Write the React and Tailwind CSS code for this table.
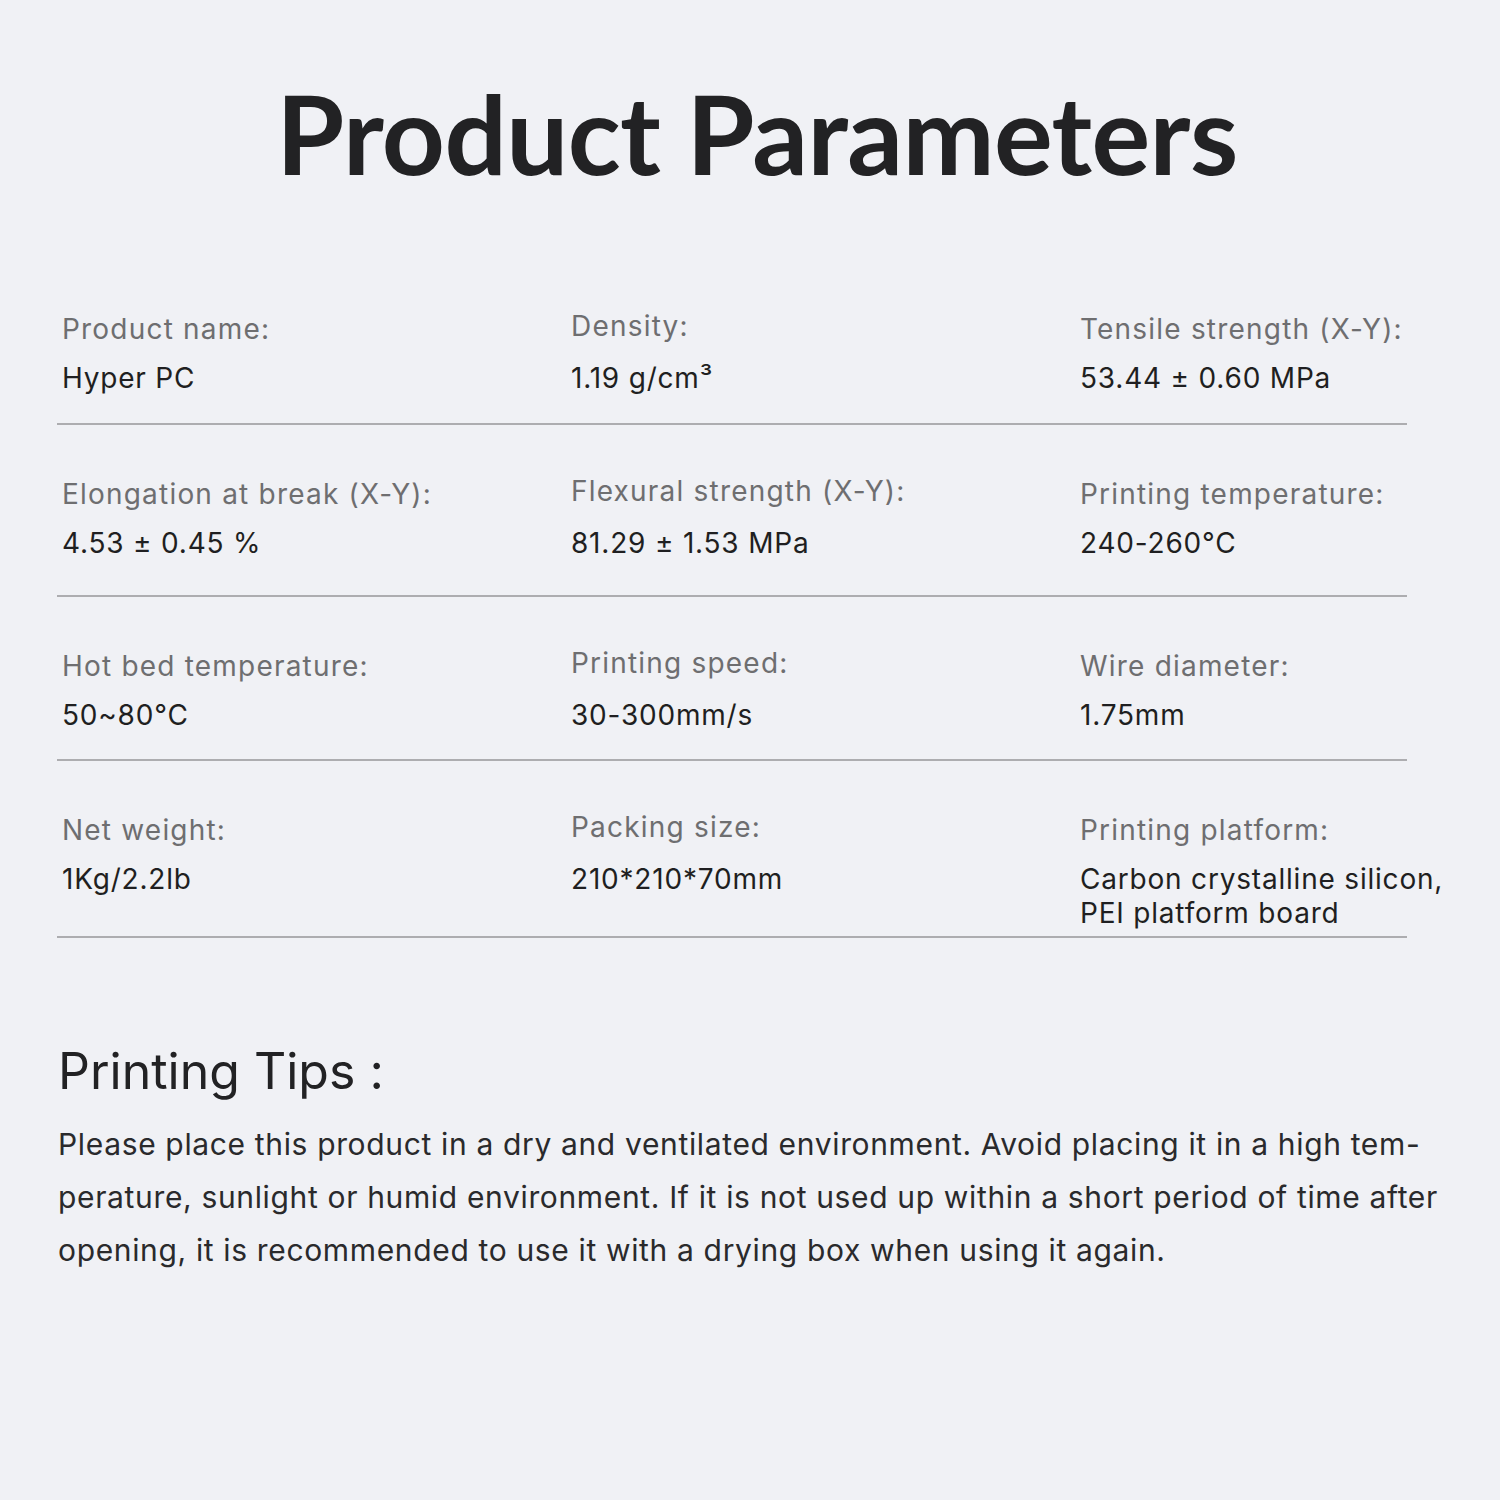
import React from 'react';

const rows = [
  {
    h: 'h-[165px]',
    items: [
      { label: 'Product name:', value: ['Hyper PC'] },
      { label: 'Density:', value: ['1.19 g/cm³'] },
      { label: 'Tensile strength (X-Y):', value: ['53.44 ± 0.60 MPa'] },
    ],
  },
  {
    h: 'h-[172px]',
    items: [
      { label: 'Elongation at break (X-Y):', value: ['4.53 ± 0.45 %'] },
      { label: 'Flexural strength (X-Y):', value: ['81.29 ± 1.53 MPa'] },
      { label: 'Printing temperature:', value: ['240-260°C'] },
    ],
  },
  {
    h: 'h-[164px]',
    items: [
      { label: 'Hot bed temperature:', value: ['50~80°C'] },
      { label: 'Printing speed:', value: ['30-300mm/s'] },
      { label: 'Wire diameter:', value: ['1.75mm'] },
    ],
  },
  {
    h: 'h-[177px]',
    items: [
      { label: 'Net weight:', value: ['1Kg/2.2lb'] },
      { label: 'Packing size:', value: ['210*210*70mm'] },
      { label: 'Printing platform:', value: ['Carbon crystalline silicon,', 'PEI platform board'] },
    ],
  },
];

const Param = ({ label, value, col }) => (
  <div className={`pl-[5px] ${col === 2 ? 'flex-1 min-w-0' : 'w-[509px] shrink-0'} ${col === 1 ? '-mt-[3px]' : ''}`}>
    <div className="text-[28px] leading-[34px] tracking-[1.2px] text-[#6e6e70] whitespace-nowrap">{label}</div>
    <p className={`mt-[15px] text-[28px] leading-[34px] tracking-[0.8px] text-[#1f1f21] whitespace-nowrap ${col === 1 ? 'pt-[3px]' : ''}`}>
      {value.map((v, k) => (
        <React.Fragment key={v}>
          {k > 0 && <br />}
          {v}
        </React.Fragment>
      ))}
    </p>
  </div>
);

export default function App() {
  return (
    <div className="w-[1500px] h-[1500px] overflow-hidden bg-[#f0f1f5] font-['Inter',sans-serif]">
      <h1 className="pt-[70px] text-center text-[110px] leading-[124px] font-bold text-[#222224] pl-[14px] tracking-[-0.6px] font-['Lato',sans-serif]">
        Product Parameters
      </h1>

      <div className="mt-[66px] ml-[57px] w-[1350px]">
        {rows.map((row, i) => (
          <div key={i} className={`flex pt-[52px] border-b-2 border-[#adadb0] ${row.h}`}>
            {row.items.map((it, j) => (
              <Param key={it.label} {...it} col={j} />
            ))}
          </div>
        ))}
      </div>

      <div className="pl-[58px] pt-[103px]">
        <h2 className="text-[50px] leading-[60px] text-[#222224]">Printing Tips :</h2>
        <p className="mt-[17px] text-[30px] leading-[53px] tracking-[0.65px] text-[#2a2a2c] whitespace-nowrap">
          Please place this product in a dry and ventilated environment. Avoid placing it in a high tem-
          <br />
          perature, sunlight or humid environment. If it is not used up within a short period of time after
          <br />
          opening, it is recommended to use it with a drying box when using it again.
        </p>
      </div>
    </div>
  );
}
